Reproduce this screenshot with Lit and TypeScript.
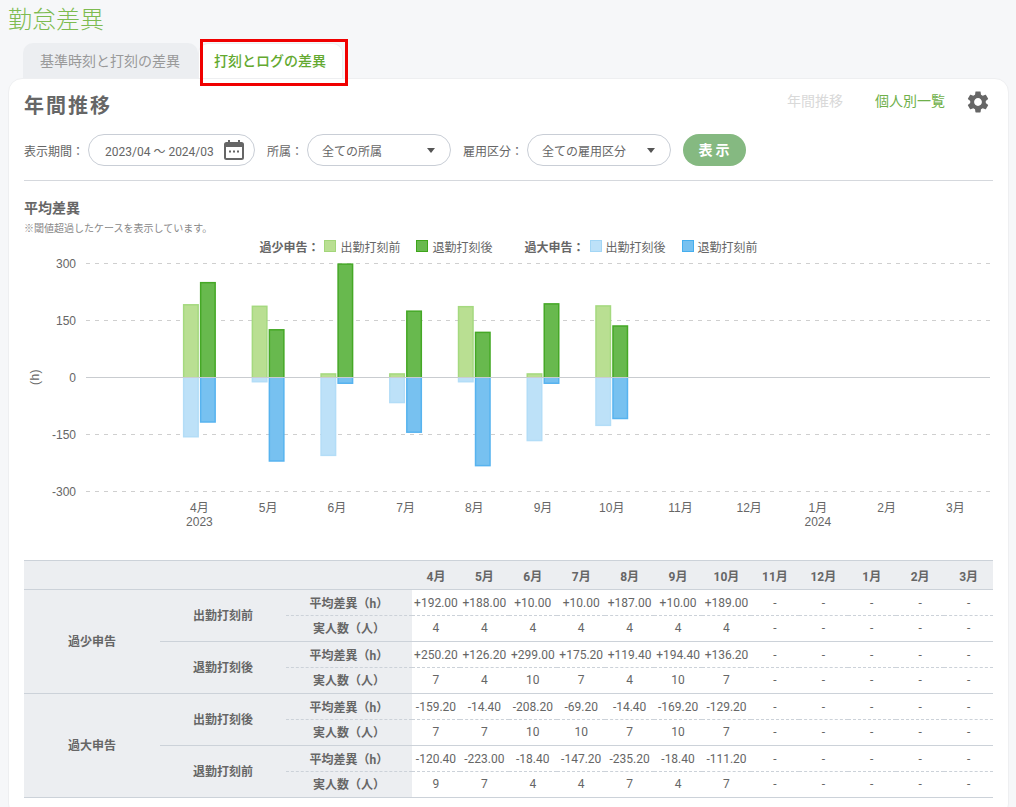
import { LitElement, html, css, svg } from "lit";
import { customElement } from "lit/decorators.js";

const MONTHS = ["4月","5月","6月","7月","8月","9月","10月","11月","12月","1月","2月","3月"];
const fmt = (a: string[]) => [...a, ...Array(12 - a.length).fill("-")];
const lg = [192,188,10,10,187,10,189];
const dg = [250.2,126.2,299,175.2,119.4,194.4,136.2];
const lb = [159.2,14.4,208.2,69.2,14.4,169.2,129.2];
const db = [120.4,223,18.4,147.2,235.2,18.4,111.2];
const ZERO = 377, K = 0.38, STEP = 68.72, C0 = 199.4;

const ROWS = [
  { g: "過少申告", sub: "出勤打刻前", avg: ["+192.00","+188.00","+10.00","+10.00","+187.00","+10.00","+189.00"], n: ["4","4","4","4","4","4","4"] },
  { g: "", sub: "退勤打刻後", avg: ["+250.20","+126.20","+299.00","+175.20","+119.40","+194.40","+136.20"], n: ["7","4","10","7","4","10","7"] },
  { g: "過大申告", sub: "出勤打刻後", avg: ["-159.20","-14.40","-208.20","-69.20","-14.40","-169.20","-129.20"], n: ["7","7","10","10","7","10","7"] },
  { g: "", sub: "退勤打刻前", avg: ["-120.40","-223.00","-18.40","-147.20","-235.20","-18.40","-111.20"], n: ["9","7","4","4","7","4","7"] },
];

/* The edge that touches the zero line runs past it and is clipped, so only the free end shows a stroke. */
const bar = (x: number, v: number, fill: string, stroke: string) => {
  const h = Math.abs(v) * K;
  const y = v >= 0 ? ZERO - h + 0.75 : ZERO - 3;
  const height = h + 2.25;
  return svg`<rect x=${x + 0.75} y=${y} width="14.5" height=${height} fill=${fill} stroke=${stroke} stroke-width="1.5"></rect>`;
};

@customElement("app-root")
export class AppRoot extends LitElement {
  static styles = css`
    :host {
      display: block;
      height: 807px;
      overflow: hidden;
      box-sizing: border-box;
      background: #f6f7f9;
      color: #666;
      font-family: Roboto, "Noto Sans CJK JP", sans-serif;
      font-size: 12px;
    }
    .title {
      height: 43px;
      margin: 0;
      padding-left: 8px;
      font-size: 24px;
      line-height: 40px;
      font-weight: 300;
      color: #7dbb50;
    }
    .tabs {
      position: relative;
      display: flex;
      height: 35px;
      margin-left: 23px;
    }
    .tab {
      width: 175px;
      box-sizing: border-box;
      padding-left: 17px;
      font-size: 14px;
      line-height: 37px;
      color: #999;
      background: #eceef1;
      border-radius: 10px 10px 0 0;
    }
    .tab.on {
      width: 145px;
      padding-left: 15px;
      font-weight: 500;
      color: #63a92f;
      background: #fff;
      border: 1px solid #eeeff1;
      border-bottom: 0;
      line-height: 35px;
    }
    .mark {
      position: absolute;
      left: 177px;
      top: -4px;
      width: 148px;
      height: 47px;
      box-sizing: border-box;
      border: 3px solid #f00000;
    }
    .card {
      margin: 0 7px 0 8px;
      height: 740px;
      box-sizing: border-box;
      padding: 0 15px;
      background: #fff;
      border: 1px solid #eeeff1;
      border-radius: 14px;
    }
    .head {
      display: flex;
      justify-content: space-between;
      height: 55px;
    }
    .head h2 {
      margin: 13px 0 0;
      font-size: 20px;
      line-height: 28px;
      font-weight: 700;
      letter-spacing: 2px;
      color: #666;
    }
    .links {
      display: flex;
      align-items: center;
      height: 26px;
      margin-top: 10px;
      margin-right: 2px;
      font-size: 14px;
    }
    .links span { margin-bottom: 4px; }
    .links .off { color: #d9d9d9; margin-right: 32px; }
    .links .go { color: #6fb04a; margin-right: 20px; }
    .links svg { display: block; fill: #666; }
    .filters {
      display: flex;
      align-items: center;
      height: 32px;
      padding-bottom: 14px;
      border-bottom: 1px solid #d5d8dd;
    }
    .filters label { white-space: nowrap; margin-right: 4px; }
    .pill {
      display: flex;
      align-items: center;
      justify-content: space-between;
      box-sizing: border-box;
      height: 32px;
      width: 144px;
      padding: 0 15px 0 14px;
      margin-right: 12px;
      border: 1px solid #c9ced6;
      border-radius: 16px;
      color: #666;
    }
    .pill.date { width: 167px; padding: 0 10px 0 16px; }
    .caret {
      width: 0;
      height: 0;
      border-left: 4.5px solid transparent;
      border-right: 4.5px solid transparent;
      border-top: 5px solid #555;
    }
    .btn {
      box-sizing: border-box;
      width: 63px;
      height: 32px;
      padding-left: 2px;
      border-radius: 16px;
      background: #85b981;
      color: #fff;
      font-size: 14px;
      font-weight: 700;
      letter-spacing: 3px;
      text-align: center;
      line-height: 32px;
    }
    .sec {
      margin: 17px 0 0;
      font-size: 14px;
      line-height: 20px;
      font-weight: 700;
      color: #666;
    }
    .note {
      font-size: 10px;
      line-height: 14px;
      margin-top: 4px;
      color: #888;
    }
    .legend {
      display: flex;
      justify-content: center;
      align-items: center;
      height: 18px;
      margin-top: 1px;
    }
    .legend b { margin-right: 5px; font-weight: 700; }
    .legend .item { display: flex; align-items: center; gap: 4px; margin-right: 16px; }
    .legend .item.end { margin-right: 32px; }
    .legend .item.last { margin-right: 0; }
    .sw { width: 12px; height: 12px; box-sizing: border-box; border: 1px solid; }
    .sw.a { background: #b9df92; border-color: #a3d67a; }
    .sw.b { background: #68b94e; border-color: #3da51a; }
    .sw.c { background: #bde1f8; border-color: #a3d6f5; }
    .sw.d { background: #77c1f0; border-color: #45aeee; }
    .chart { display: block; }
    .chart text { font-size: 12px; fill: #666; font-family: "Liberation Sans", "Noto Sans CJK JP", sans-serif; }
    .chart .unit { letter-spacing: 0.5px; }
    table {
      width: 969px;
      table-layout: fixed;
      border-collapse: separate;
      border-spacing: 0;
    }
    th, td {
      box-sizing: border-box;
      padding: 0;
      text-align: center;
      height: 26px;
      border-bottom: 1px solid #ccd2d9;
      font-weight: 400;
    }
    thead th {
      height: 30px;
      border-top: 1px solid #ccd2d9;
      background: #eceef1;
      font-weight: 700;
    }
    tbody th { background: #eceef1; font-weight: 700; }
    .dash { border-bottom: 1px dashed #ccd2d9; }
    .up { padding-bottom: 2px; }
  `;

  private chart() {
    const ticks = [300, 150, 0, -150, -300];
    return html`<svg class="chart" width="969" height="305" viewBox="24 255 969 305">
      <defs>
        <clipPath id="above"><rect x="86" y="255" width="904" height="122"></rect></clipPath>
        <clipPath id="below"><rect x="86" y="377" width="904" height="130"></rect></clipPath>
      </defs>
      ${ticks.filter((t) => t !== 0).map((t) => svg`<line x1="86" x2="990" y1=${ZERO - t * K + 0.5} y2=${ZERO - t * K + 0.5} stroke="#cfcfcf" stroke-dasharray="4 5"></line>`)}
      ${ticks.map((t) => svg`<text x="76" y=${ZERO - t * K + 4.5} text-anchor="end">${t}</text>`)}
      <text class="unit" transform="translate(39 377) rotate(-90)" text-anchor="middle">(h)</text>
      <g clip-path="url(#above)">
        ${lg.map((v, i) => bar(C0 - 16.5 + i * STEP, v, "#b9df92", "#a5d97f"))}
        ${dg.map((v, i) => bar(C0 + 0.5 + i * STEP, v, "#68b94e", "#45a826"))}
      </g>
      <g clip-path="url(#below)">
        ${lb.map((v, i) => bar(C0 - 16.5 + i * STEP, -v, "#bde1f8", "#b3ddf7"))}
        ${db.map((v, i) => bar(C0 + 0.5 + i * STEP, -v, "#77c1f0", "#57b3ef"))}
      </g>
      <line x1="86" x2="990" y1="377.5" y2="377.5" stroke="#c9ccd0"></line>
      ${MONTHS.map((m, i) => svg`<text x=${C0 + i * STEP} y="511.500" text-anchor="middle">${m}</text>`)}
      <text x=${C0} y="526" text-anchor="middle">2023</text>
      <text x=${C0 + 9 * STEP} y="526" text-anchor="middle">2024</text>
    </svg>`;
  }

  private table() {
    return html`<table>
      <colgroup>
        <col style="width:136px" /><col style="width:126px" /><col style="width:125.500px" />
        ${MONTHS.map(() => html`<col style="width:48.420px" />`)}
      </colgroup>
      <thead>
        <tr><th colspan="3"></th>${MONTHS.map((m) => html`<th>${m}</th>`)}</tr>
      </thead>
      <tbody>
        ${ROWS.map((r) => html`
          <tr>
            ${r.g ? html`<th class="up" rowspan="4">${r.g}</th>` : ""}
            <th class="up" rowspan="2">${r.sub}</th>
            <th class="dash">平均差異（h）</th>
            ${fmt(r.avg).map((v) => html`<td class="dash">${v}</td>`)}
          </tr>
          <tr>
            <th class="up">実人数（人）</th>
            ${fmt(r.n).map((v) => html`<td class="up">${v}</td>`)}
          </tr>`)}
      </tbody>
    </table>`;
  }

  render() {
    return html`
      <h1 class="title">勤怠差異</h1>
      <div class="tabs">
        <div class="tab">基準時刻と打刻の差異</div>
        <div class="tab on">打刻とログの差異</div>
        <div class="mark"></div>
      </div>
      <div class="card">
        <div class="head">
          <h2>年間推移</h2>
          <div class="links">
            <span class="off">年間推移</span>
            <span class="go">個人別一覧</span>
            <svg width="26" height="26" viewBox="0 0 24 24"><path d="M19.14 12.94c.04-.3.06-.61.06-.94 0-.32-.02-.64-.07-.94l2.03-1.58c.18-.14.23-.41.12-.61l-1.92-3.32c-.12-.22-.37-.29-.59-.22l-2.39.96c-.5-.38-1.03-.7-1.62-.94l-.36-2.54c-.04-.24-.24-.41-.48-.41h-3.84c-.24 0-.43.17-.47.41l-.36 2.54c-.59.24-1.13.57-1.62.94l-2.39-.96c-.22-.08-.47 0-.59.22L2.74 8.87c-.12.21-.08.47.12.61l2.03 1.58c-.05.3-.09.63-.09.94s.02.64.07.94l-2.03 1.58c-.18.14-.23.41-.12.61l1.92 3.32c.12.22.37.29.59.22l2.39-.96c.5.38 1.03.7 1.62.94l.36 2.54c.05.24.24.41.48.41h3.84c.24 0 .44-.17.47-.41l.36-2.54c.59-.24 1.13-.56 1.62-.94l2.39.96c.22.08.47 0 .59-.22l1.92-3.32c.12-.22.07-.47-.12-.61l-2.01-1.58zM12 15.6c-1.98 0-3.6-1.62-3.6-3.6s1.62-3.6 3.6-3.6 3.6 1.62 3.6 3.6-1.62 3.6-3.6 3.6z"></path></svg>
          </div>
        </div>
        <div class="filters">
          <label>表示期間：</label>
          <div class="pill date">
            <span>2023/04 ～ 2024/03</span>
            <svg width="20" height="20" viewBox="0 0 20 20"><path fill="#666" d="M4 0h2v2h8V0h2v2h1.5A2.5 2.5 0 0 1 20 4.500V17.500A2.500 2.500 0 0 1 17.500 20H2.500A2.500 2.500 0 0 1 0 17.500V4.500A2.500 2.500 0 0 1 2.500 2H4zM2 7v10.500a.5.5 0 0 0 .5.5h15a.5.5 0 0 0 .5-.5V7z"></path><rect x="5" y="10.500" width="2" height="2" fill="#666"></rect><rect x="9" y="10.500" width="2" height="2" fill="#666"></rect><rect x="13" y="10.500" width="2" height="2" fill="#666"></rect></svg>
          </div>
          <label>所属：</label>
          <div class="pill"><span>全ての所属</span><i class="caret"></i></div>
          <label>雇用区分：</label>
          <div class="pill"><span>全ての雇用区分</span><i class="caret"></i></div>
          <div class="btn">表示</div>
        </div>
        <h3 class="sec">平均差異</h3>
        <div class="note">※閾値超過したケースを表示しています。</div>
        <div class="legend">
          <b>過少申告：</b>
          <span class="item"><i class="sw a"></i>出勤打刻前</span>
          <span class="item end"><i class="sw b"></i>退勤打刻後</span>
          <b>過大申告：</b>
          <span class="item"><i class="sw c"></i>出勤打刻後</span>
          <span class="item last"><i class="sw d"></i>退勤打刻前</span>
        </div>
        ${this.chart()}
        ${this.table()}
      </div>
    `;
  }
}
